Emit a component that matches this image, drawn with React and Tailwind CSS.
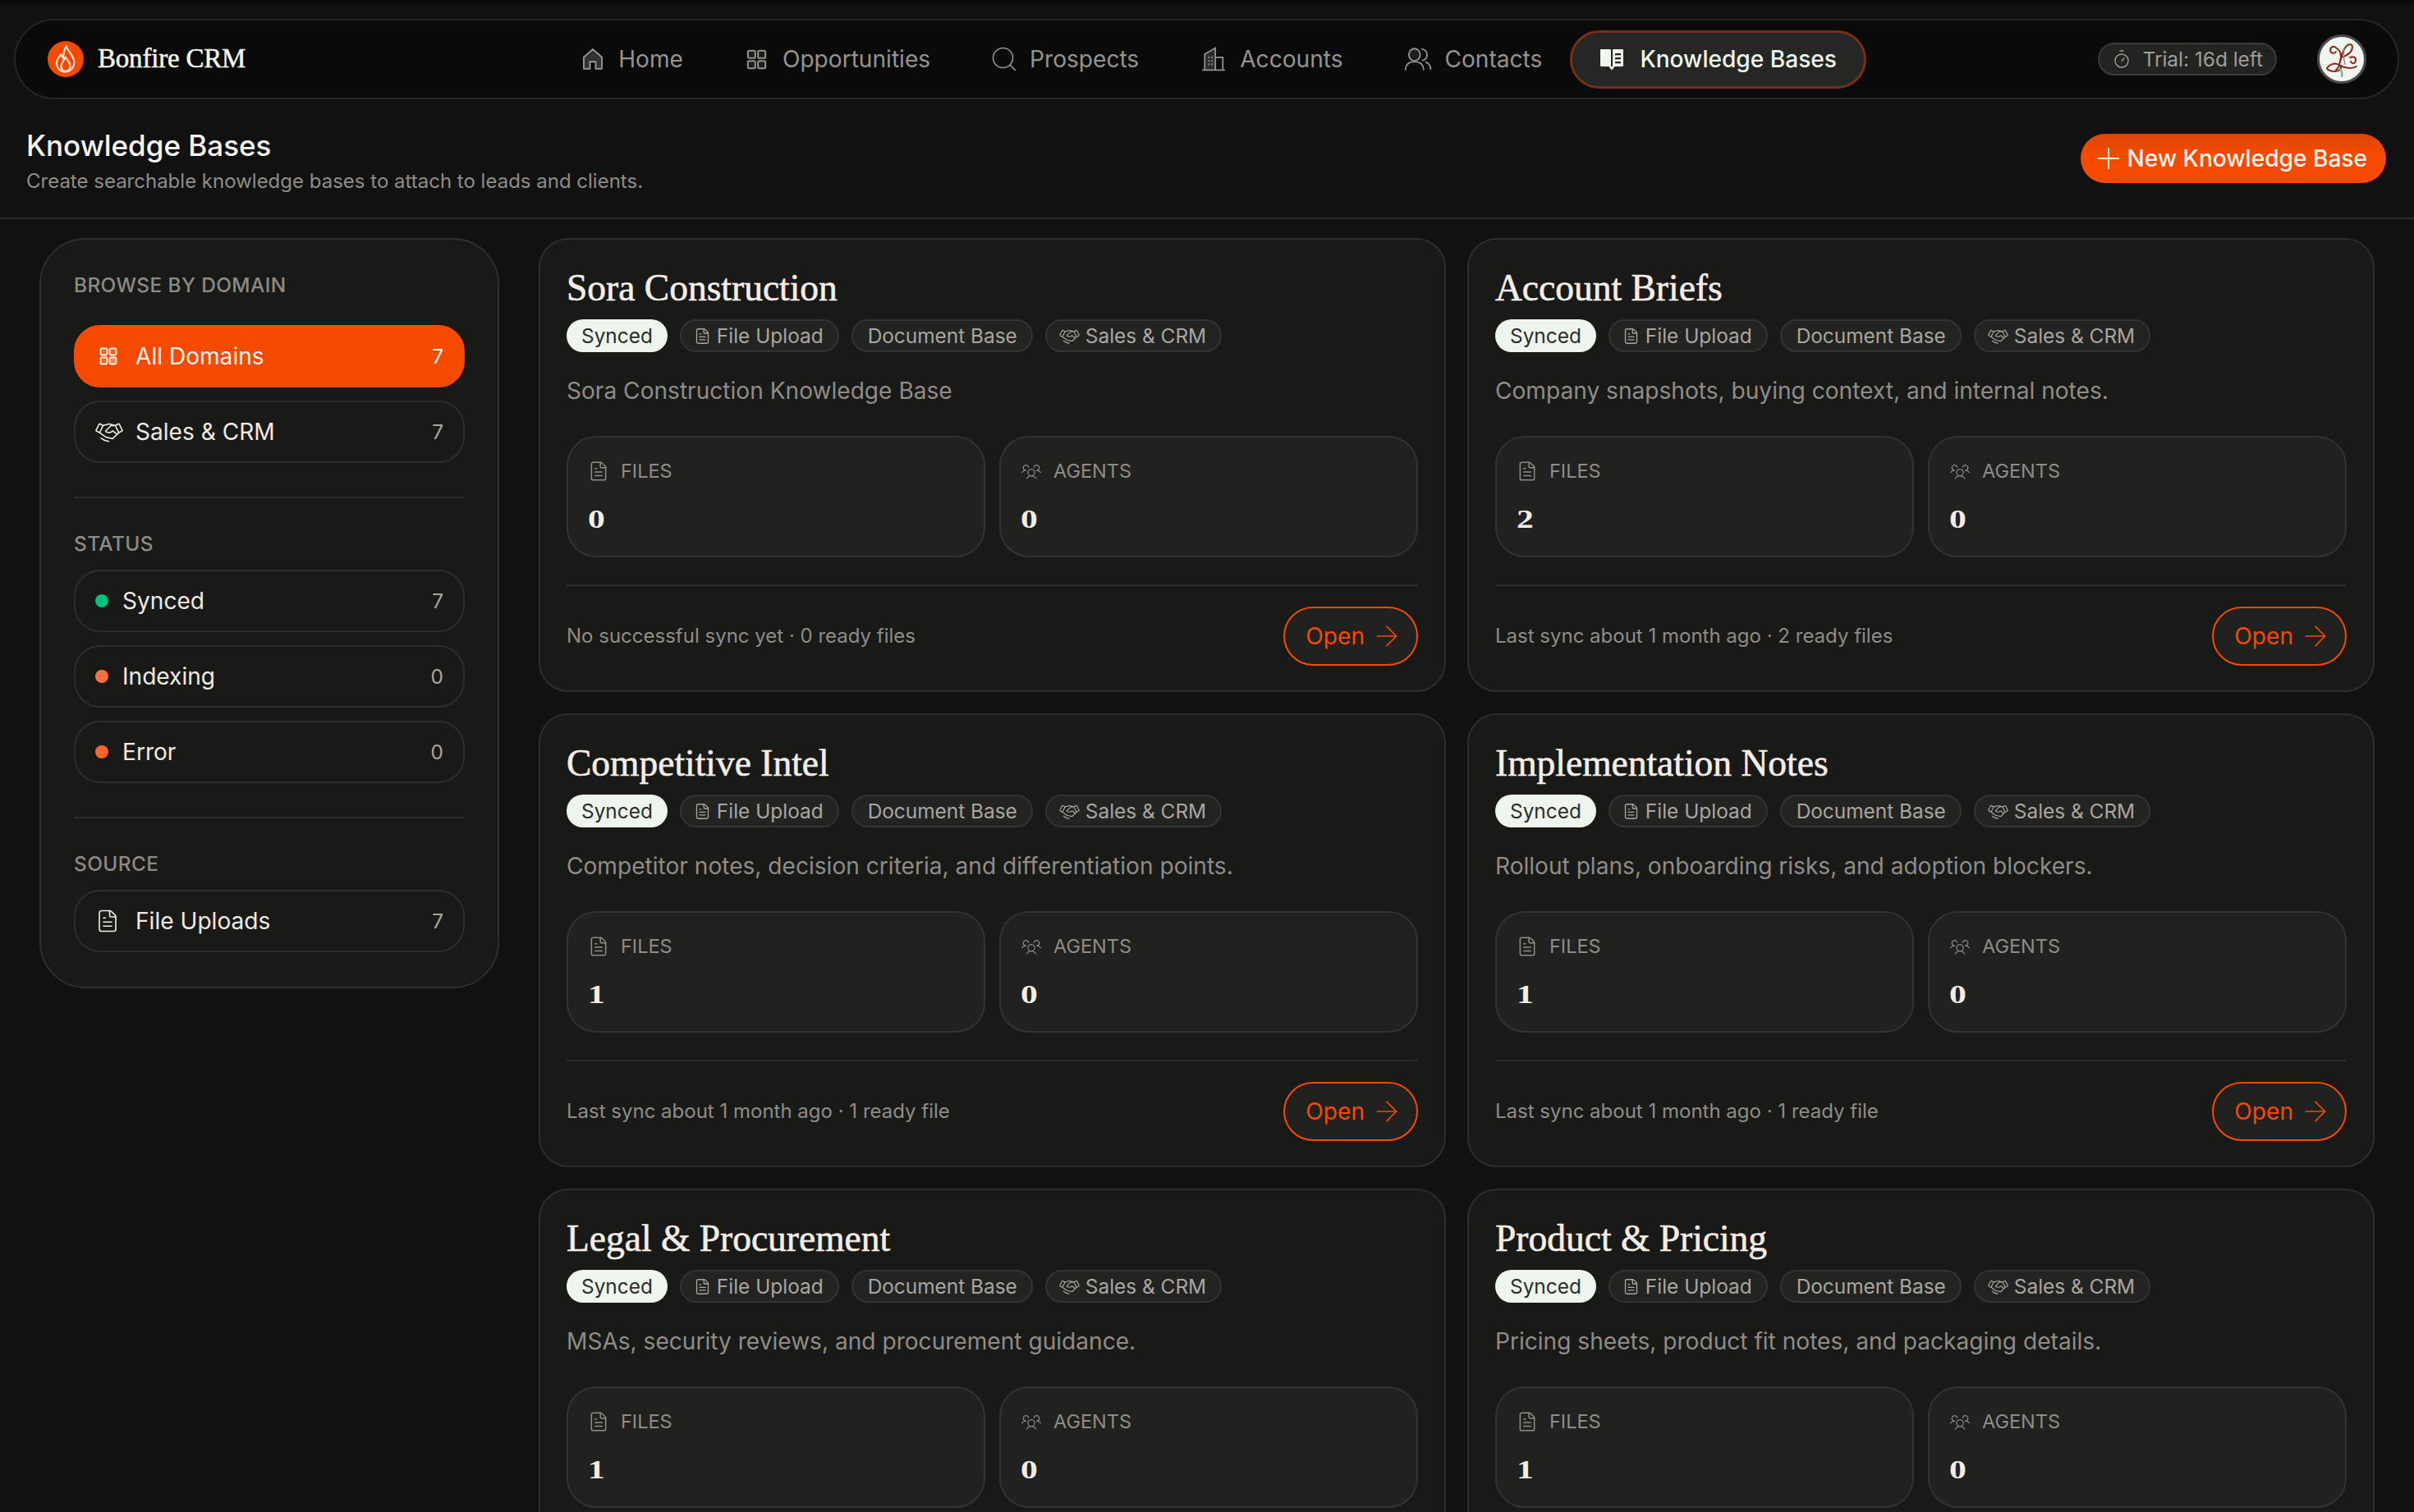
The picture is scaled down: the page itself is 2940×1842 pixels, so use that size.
import { ArrowRight, FileText, Plus, Search, Timer } from 'lucide-react';
import { PiHandshakeLight, PiUsersThreeLight } from 'react-icons/pi';

function HomeIcon({ className }) {
  return (
    <svg className={className} viewBox="2.500 2 19 20" fill="none" stroke="currentColor" strokeWidth="1.500" strokeLinejoin="round">
      <path d="M3.500 21V10.200L12 2.800l8.500 7.400V21h-5.800v-6.500H9.300V21z" fill="currentColor" fillOpacity="0.3" />
    </svg>
  );
}

function GridIcon({ className, accent }) {
  return (
    <svg className={className} viewBox="0 0 24 24" fill="none" stroke="currentColor" strokeWidth="1.800" strokeLinejoin="round">
      <rect x="2.500" y="2.500" width="8" height="8" rx="1.500" fill="currentColor" fillOpacity="0.15" />
      <rect x="13.500" y="2.500" width="8" height="8" rx="1.500" fill="currentColor" fillOpacity="0.15" />
      <rect x="2.500" y="13.500" width="8" height="8" rx="1.500" fill="currentColor" fillOpacity="0.15" />
      <rect x="13.500" y="13.500" width="8" height="8" rx="1.500" fill="currentColor" fillOpacity={accent ? 0.35 : 0.15} />
    </svg>
  );
}

function BuildingIcon({ className }) {
  return (
    <svg className={className} viewBox="0 0 28 28" fill="none" stroke="currentColor" strokeWidth="1.600">
      <path d="M1 26.500h26" />
      <path d="M4 26.500V8.500L16 1.500v25" fill="currentColor" fillOpacity="0.25" />
      <path d="M16 12h8.500v14.500" />
      <path d="M8 12h1.500M11.500 12H13M8 16h1.500M11.500 16H13M8 20h1.500M11.500 20H13" strokeWidth="2" />
    </svg>
  );
}

function ContactsIcon({ className }) {
  return (
    <svg className={className} viewBox="0 0 32 28" fill="none" stroke="currentColor" strokeWidth="1.700" strokeLinecap="round">
      <ellipse cx="12" cy="9" rx="6.500" ry="7" fill="currentColor" fillOpacity="0.15" />
      <path d="M1.500 26c.5-5.500 4-9 10.500-9s10 3.500 10.500 9" />
      <path d="M20.500 2.500c3.500.2 5.800 3 5.800 6.500s-2.300 6-5 6.500" />
      <path d="M25 17.500c3.500 1.300 5.300 4.200 5.500 8" />
    </svg>
  );
}

function BookIcon({ className }) {
  return (
    <svg className={className} viewBox="0 0 30 28" fill="currentColor">
      <path d="M1 2h11.500c1 0 1.500.5 1.500 1.500V23H2.500C1.500 23 1 22.500 1 21.500z" />
      <path d="M16 3.500c0-1 .5-1.500 1.500-1.500H29v19.500c0 1-.5 1.500-1.500 1.500H16zM19 7v2.200h7V7zm0 5v2.200h7V12zm0 5v2.200h7V17z" fillRule="evenodd" />
      <path d="M11.500 23h7L15 27.500z" />
    </svg>
  );
}

function FlameLogo() {
  return (
    <div className="flex h-[44px] w-[44px] shrink-0 items-center justify-center rounded-full bg-[#f54a00]">
      <svg className="h-[38px] w-[38px]" viewBox="0 0 24 24" fill="none" stroke="#ffe6da" strokeWidth="1.300" strokeLinecap="round" strokeLinejoin="round">
        <path d="M12.500 2c.5 3.500 5.500 6.500 6 12 .3 4.200-2.800 7.800-6.800 7.800-3.800 0-6.700-3-6.700-6.600 0-3.200 2-5.200 3.500-7 .3 1.500.8 2.500 1.800 3 0-3.500.5-6.700 2.200-9.200z" />
        <path d="M12 21.500c-2.500-.5-3.500-2.500-3.500-4.300 0-2.200 2-4 3.500-6.700 1.500 2.800 3.500 4.500 3.500 6.900 0 2-1 3.700-3.500 4.100" />
      </svg>
    </div>
  );
}

function Avatar() {
  return (
    <div className="flex h-[60px] w-[60px] shrink-0 items-center justify-center rounded-full border-[3px] border-[#4a4a48] bg-[#eef6ef]">
      <svg className="h-[52px] w-[52px]" viewBox="0 0 52 52" fill="none" stroke="#8a2a1c" strokeWidth="2" strokeLinecap="round">
        <path d="M20 13c-3-4-8-2-8 2s5 5 7 2" />
        <path d="M20 13c5 3 6 9 4 16-1 5-3 9-5 10" />
        <path d="M24 29c2-9 5-19 11-21 5-1 5 6 1 10-3 3-7 5-11 6" />
        <path d="M8 37c4-6 12-7 16-3 3 3-1 7-6 7s-10-2-10-4z" />
        <path d="M24 34c5 2 14 5 20 1" />
        <path d="M36 24c4-2 8 0 7 4s-5 4-6 1" />
        <path d="M24 38c2 3 3 6 2 9" stroke="#9a8f88" />
        <path d="M29 14c-1 6-1 12 1 18" stroke="#9a8f88" strokeWidth="1.500" />
      </svg>
    </div>
  );
}

const navItems = [
  { label: 'Home', slot: 'w-[27px]', icon: <HomeIcon className="h-[26px] w-[26px] shrink-0" /> },
  { label: 'Opportunities', slot: 'w-[27px]', icon: <GridIcon className="h-[27px] w-[27px] shrink-0" /> },
  { label: 'Prospects', slot: 'w-[27px]', icon: <Search className="h-[36px] w-[36px] shrink-0" strokeWidth={1.100} /> },
  { label: 'Accounts', slot: 'w-[29px]', icon: <BuildingIcon className="h-[30px] w-[30px] shrink-0" /> },
  { label: 'Contacts', slot: 'w-[30px]', icon: <ContactsIcon className="h-[30px] w-[34px] shrink-0" /> },
];

const cards = [
  { title: 'Sora Construction', description: 'Sora Construction Knowledge Base', files: 0, sync: 'No successful sync yet · 0 ready files' },
  { title: 'Account Briefs', description: 'Company snapshots, buying context, and internal notes.', files: 2, sync: 'Last sync about 1 month ago · 2 ready files' },
  { title: 'Competitive Intel', description: 'Competitor notes, decision criteria, and differentiation points.', files: 1, sync: 'Last sync about 1 month ago · 1 ready file' },
  { title: 'Implementation Notes', description: 'Rollout plans, onboarding risks, and adoption blockers.', files: 1, sync: 'Last sync about 1 month ago · 1 ready file' },
  { title: 'Legal & Procurement', description: 'MSAs, security reviews, and procurement guidance.', files: 1, sync: 'Last sync about 1 month ago · 1 ready file' },
  { title: 'Product & Pricing', description: 'Pricing sheets, product fit notes, and packaging details.', files: 1, sync: 'Last sync about 1 month ago · 1 ready file' },
];

function SideLabel({ children }) {
  return <div className="text-[24.400px] leading-[30px] font-medium tracking-[0.4px] text-[#8c8a86]">{children}</div>;
}

function SideRow({ icon, label, count, active }) {
  return (
    <div
      className={`flex h-[76px] items-center rounded-[32px] border-2 px-[24px] ${
        active ? 'border-[#f54a00] bg-[#f54a00] text-[#fdf3ec]' : 'border-[#2e2e2d] text-[#efeae4]'
      }`}
    >
      {icon}
      <span className="text-[28.100px] leading-[40px]">{label}</span>
      <span className={`ml-auto text-[24.400px] ${active ? 'text-[#fdf3ec]' : 'text-[#a9a6a1]'}`}>{count}</span>
    </div>
  );
}

function Dot({ color }) {
  return <span className={`mr-[17px] h-[16px] w-[16px] rounded-full ${color}`} />;
}

function Chip({ icon, children }) {
  return (
    <span className={`flex h-[40px] items-center gap-[7px] rounded-full border-2 border-[#333331] bg-[#232321] pr-[17px] text-[24.400px] text-[#a9a6a1] ${icon ? 'pl-[15px]' : 'pl-[18px]'}`}>
      {icon}
      {children}
    </span>
  );
}

function Stat({ icon, label, value }) {
  return (
    <div className="h-[148px] flex-1 rounded-[36px] border-2 border-[#333331] bg-[#21211f] px-[24px] pt-[26px]">
      <div className="flex h-[30px] items-center gap-[14px] text-[23.500px] text-[#8f8c88]">
        {icon}
        {label}
      </div>
      <div className="mt-[23px] h-[40px] font-['Liberation_Serif',serif] text-[32px] leading-[40px] font-bold text-[#f3ede7]">
        <span className="inline-block origin-left scale-x-[1.3]">{value}</span>
      </div>
    </div>
  );
}

function Card({ card }) {
  return (
    <div className="rounded-[36px] border-2 border-[#2e2e2d] bg-[#191918] px-[32px] pt-[29px] pb-[30px]">
      <h2 className="font-['Liberation_Serif',serif] text-[45.500px] leading-[60px] text-[#f3ede7] [-webkit-text-stroke:0.6px_currentColor]">{card.title}</h2>
      <div className="mt-[8px] flex gap-[15px]">
        <span className="flex h-[40px] items-center rounded-full bg-[#eef5ee] px-[18px] text-[24.400px] text-[#2c2c2a]">Synced</span>
        <Chip icon={<FileText className="h-[21px] w-[21px]" strokeWidth={1.500} />}>File Upload</Chip>
        <Chip>Document Base</Chip>
        <Chip icon={<PiHandshakeLight className="h-[25px] w-[25px]" />}>Sales &amp; CRM</Chip>
      </div>
      <p className="mt-[29px] text-[28.100px] leading-[36px] text-[#8f8c88]">{card.description}</p>
      <div className="mt-[37px] flex gap-[17px]">
        <Stat icon={<FileText className="h-[26px] w-[26px]" strokeWidth={1.400} />} label="FILES" value={card.files} />
        <Stat icon={<PiUsersThreeLight className="h-[26px] w-[26px]" />} label="AGENTS" value={0} />
      </div>
      <div className="mt-[33px] flex items-center justify-between border-t-2 border-[#2b2b2a] pt-[25px]">
        <span className="text-[24px] text-[#8f8c88]">{card.sync}</span>
        <button className="flex h-[72px] items-center gap-[7px] rounded-full border-2 border-[#f54a00] bg-[#21211f] pr-[16px] pl-[25px] text-[28.100px] text-[#f54a00]">
          Open
          <ArrowRight className="h-[40px] w-[40px]" strokeWidth={1} />
        </button>
      </div>
    </div>
  );
}

export default function App() {
  return (
    <div className="h-screen overflow-hidden border-t-4 border-[#0a0a0a] bg-[#111111] font-['Inter',sans-serif]">
      <div className="pt-[19px] pr-[18px] pl-[17px]">
        <nav className="flex h-[98px] items-center rounded-full border-2 border-[#262625] bg-[#0a0a0a] pr-[38px] pl-[39px]">
          <FlameLogo />
          <span className="ml-[17px] font-['Liberation_Serif',serif] text-[33px] tracking-[-0.2px] text-[#f1f5ee] [-webkit-text-stroke:0.5px_currentColor]">Bonfire CRM</span>
          <div className="ml-[371px] flex items-center">
            {navItems.map((item) => (
              <a key={item.label} className="flex h-[71px] items-center gap-[18px] px-[38px] text-[28.100px] text-[#96938f]">
                <span className={`flex justify-center ${item.slot}`}>{item.icon}</span>
                {item.label}
              </a>
            ))}
            <a className="-ml-[4px] flex h-[71px] items-center gap-[19px] rounded-full border-[3.500px] border-[#7a2e18] bg-[#262624] px-[33px] text-[28.100px] font-medium text-[#f0f6ee]">
              <BookIcon className="h-[28px] w-[30px]" />
              Knowledge Bases
            </a>
          </div>
          <div className="ml-auto flex items-center gap-[49px]">
            <div className="flex h-[40px] items-center gap-[14px] rounded-full border-2 border-[#3a3a38] bg-[#232321] px-[15px] text-[24.400px] text-[#a09d98]">
              <Timer className="h-[24px] w-[24px]" strokeWidth={1.400} />
              Trial: 16d left
            </div>
            <Avatar />
          </div>
        </nav>
      </div>

      <header className="flex h-[146px] items-start justify-between border-b-2 border-[#2b2b2a] pt-[32px] pr-[34px] pl-[32px]">
        <div>
          <h1 className="text-[35px] leading-[48px] font-medium text-[#f4f7f0]">Knowledge Bases</h1>
          <p className="mt-[2px] text-[24px] leading-[36px] text-[#8f8c88]">Create searchable knowledge bases to attach to leads and clients.</p>
        </div>
        <button className="mt-[10px] flex h-[60px] items-center gap-[2px] rounded-full bg-linear-to-b from-[#dc4509] to-[#f54a00] to-[40%] pr-[23px] pl-[13px] text-[28.100px] font-medium text-[#fdf6f0]">
          <Plus className="h-[42px] w-[42px]" strokeWidth={1.100} />
          New Knowledge Base
        </button>
      </header>

      <main className="flex items-start gap-[48px] px-[48px] pt-[23px]">
        <aside className="w-[560px] shrink-0 rounded-[56px] border-2 border-[#2e2e2d] bg-[#191918] px-[40px] pt-[40px] pb-[42px]">
          <SideLabel>BROWSE BY DOMAIN</SideLabel>
          <div className="mt-[34px] flex flex-col gap-[16px]">
            <SideRow active icon={<GridIcon accent className="mr-[21px] ml-[4px] h-[24px] w-[24px]" />} label="All Domains" count={7} />
            <SideRow icon={<PiHandshakeLight className="mr-[15px] h-[34px] w-[34px]" />} label="Sales & CRM" count={7} />
          </div>
          <div className="mt-[41px] border-t-2 border-[#2b2b2a]" />
          <div className="mt-[40px]"><SideLabel>STATUS</SideLabel></div>
          <div className="mt-[17px] flex flex-col gap-[16px]">
            <SideRow icon={<Dot color="bg-[#00c07f]" />} label="Synced" count={7} />
            <SideRow icon={<Dot color="bg-[#ff7043]" />} label="Indexing" count={0} />
            <SideRow icon={<Dot color="bg-[#ff6430]" />} label="Error" count={0} />
          </div>
          <div className="mt-[41px] border-t-2 border-[#2b2b2a]" />
          <div className="mt-[40px]"><SideLabel>SOURCE</SideLabel></div>
          <div className="mt-[17px]">
            <SideRow icon={<FileText className="mr-[19px] h-[30px] w-[30px]" strokeWidth={1.300} />} label="File Uploads" count={7} />
          </div>
        </aside>

        <section className="grid flex-1 grid-cols-2 gap-[26px]">
          {cards.map((card) => (
            <Card key={card.title} card={card} />
          ))}
        </section>
      </main>
    </div>
  );
}
